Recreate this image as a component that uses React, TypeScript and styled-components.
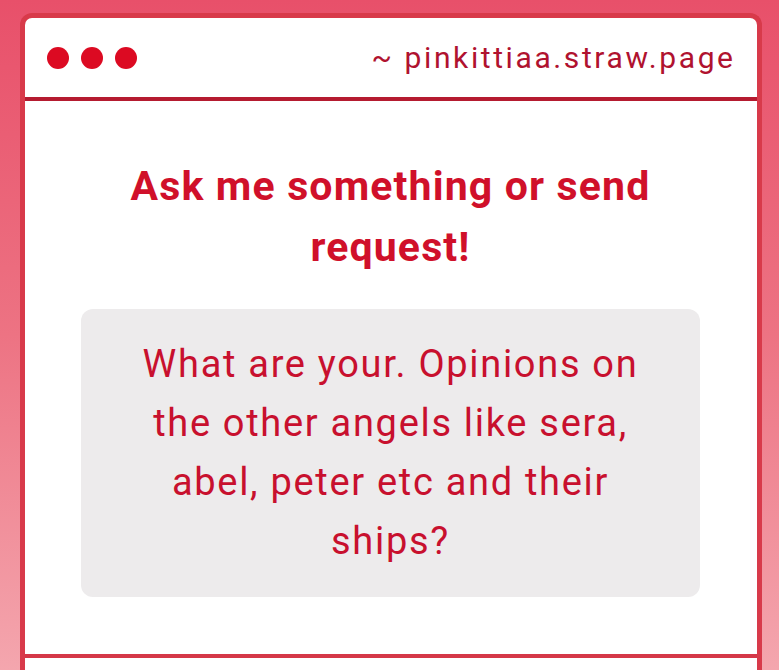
import React from "react";
import styled, { createGlobalStyle } from "styled-components";

const Global = createGlobalStyle`
  html, body { margin: 0; padding: 0; }
  body {
    width: 779px;
    height: 670px;
    overflow: hidden;
    background: linear-gradient(180deg, #e8506a 0%, #ed7383 50%, #f4a6ae 100%);
    font-family: Roboto, "Noto Sans", sans-serif;
  }
`;

const Page = styled.div`
  padding: 13px 17px 0 20px;
`;

const Card = styled.div`
  background: #ffffff;
  border: 5px solid #d83a4a;
  border-bottom: none;
  border-radius: 12px 12px 0 0;
  overflow: hidden;
`;

const Header = styled.div`
  height: 79px;
  display: flex;
  align-items: center;
  justify-content: space-between;
  padding: 0 24px 0 22px;
  border-bottom: 4px solid #b51b30;
`;

const Dots = styled.div`
  display: flex;
  gap: 12px;
`;

const Dot = styled.span`
  width: 22px;
  height: 22px;
  border-radius: 50%;
  background: #dc0a22;
`;

const Url = styled.span`
  font-size: 30px;
  letter-spacing: 2.6px;
  margin-right: -2.6px;
  color: #b0122f;
`;

const Body = styled.div`
  padding: 55px 57px 57px 56px;
  border-bottom: 4px solid #d53848;
  display: flex;
  flex-direction: column;
  align-items: center;
  gap: 31px;
`;

const Title = styled.h1`
  margin: 0;
  font-size: 41px;
  font-weight: 700;
  letter-spacing: 1.15px;
  line-height: 61px;
  color: #d0102a;
  text-align: center;
`;

const Question = styled.div`
  align-self: stretch;
  background: #edebec;
  border-radius: 12px;
  padding: 26px 44px;
  font-size: 38px;
  letter-spacing: 1.7px;
  line-height: 59px;
  color: #c8102e;
  text-align: center;
`;

const Footer = styled.div`
  height: 40px;
`;

export default function App() {
  return (
    <>
      <Global />
      <Page>
        <Card>
          <Header>
            <Dots>
              <Dot />
              <Dot />
              <Dot />
            </Dots>
            <Url>~ pinkittiaa.straw.page</Url>
          </Header>
          <Body>
            <Title>Ask me something or send request!</Title>
            <Question>
              What are your. Opinions on the other angels like sera, abel, peter etc and their ships?
            </Question>
          </Body>
          <Footer />
        </Card>
      </Page>
    </>
  );
}
